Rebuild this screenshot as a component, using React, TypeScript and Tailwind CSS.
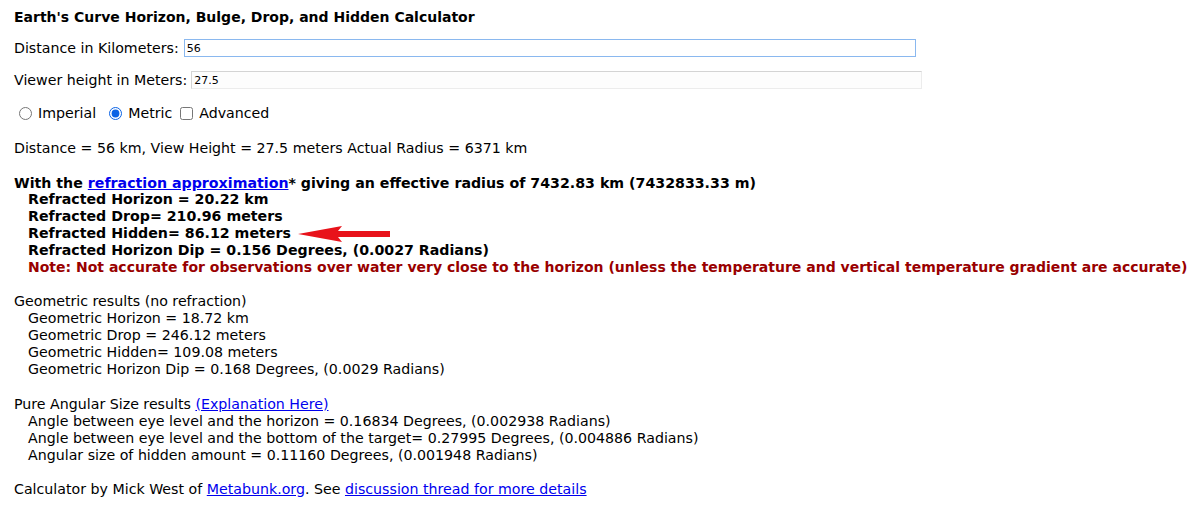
import React from 'react';

const font = { fontFamily: '"DejaVu Sans", Verdana, sans-serif' };

function Arrow() {
  return (
    <svg width="92" height="16" viewBox="0 0 92 16" className="ml-[7px] inline-block align-middle">
      <polygon points="0,8 44,0 40,5 92,5 92,11 40,11 44,16" fill="#e8121a" />
    </svg>
  );
}

export default function App() {
  return (
    <div className="px-[14px] pt-[8px] text-[14.2px] leading-[17px] text-black bg-white" style={font}>
      <h1 className="font-bold text-[14px] leading-[18px]">Earth's Curve Horizon, Bulge, Drop, and Hidden Calculator</h1>

      <div className="mt-[13px] flex items-center">
        <span>Distance in Kilometers:</span>
        <input
          defaultValue="56"
          className="ml-[5px] w-[732px] h-[18px] border border-[#8ab8ef] px-[2px] text-[11px] outline-none"
        />
      </div>

      <div className="mt-[14px] flex items-center">
        <span>Viewer height in Meters:</span>
        <input
          defaultValue="27.5"
          className="ml-[4px] w-[731px] h-[18px] border border-[#d4d4d4] border-b-[#ececec] border-r-[#ececec] bg-[#fdfdfd] px-[2px] text-[11px] outline-none"
        />
      </div>

      <div className="mt-[16px] flex items-center pl-[5px]">
        <input type="radio" name="units" className="w-[13px] h-[13px] m-0 accent-[#0b63e5]" />
        <span className="ml-[6px]">Imperial</span>
        <input type="radio" name="units" defaultChecked className="ml-[13px] w-[13px] h-[13px] m-0 accent-[#0b63e5]" />
        <span className="ml-[6px]">Metric</span>
        <input type="checkbox" className="ml-[8px] w-[13px] h-[13px] m-0" />
        <span className="ml-[6px]">Advanced</span>
      </div>

      <p className="mt-[18px]">Distance = 56 km, View Height = 27.5 meters Actual Radius = 6371 km</p>

      <div className="mt-[18px] font-bold">
        <p className="leading-[16px]">
          With the <a href="#" className="text-[#0000ee] underline">refraction approximation</a>* giving an effective radius of 7432.83 km (7432833.33 m)
        </p>
        <div className="pl-[14px]">
          <p>Refracted Horizon = 20.22 km</p>
          <p>Refracted Drop= 210.96 meters</p>
          <p className="flex items-center">Refracted Hidden= 86.12 meters<Arrow /></p>
          <p>Refracted Horizon Dip = 0.156 Degrees, (0.0027 Radians)</p>
          <p className="text-[#990000] text-[14px] whitespace-nowrap">Note: Not accurate for observations over water very close to the horizon (unless the temperature and vertical temperature gradient are accurate)</p>
        </div>
      </div>

      <div className="mt-[17px]">
        <p>Geometric results (no refraction)</p>
        <div className="pl-[14px]">
          <p>Geometric Horizon = 18.72 km</p>
          <p>Geometric Drop = 246.12 meters</p>
          <p>Geometric Hidden= 109.08 meters</p>
          <p>Geometric Horizon Dip = 0.168 Degrees, (0.0029 Radians)</p>
        </div>
      </div>

      <div className="mt-[18px]">
        <p>
          Pure Angular Size results <a href="#" className="text-[#0000ee] underline">(Explanation Here)</a>
        </p>
        <div className="pl-[14px]">
          <p>Angle between eye level and the horizon = 0.16834 Degrees, (0.002938 Radians)</p>
          <p>Angle between eye level and the bottom of the target= 0.27995 Degrees, (0.004886 Radians)</p>
          <p>Angular size of hidden amount = 0.11160 Degrees, (0.001948 Radians)</p>
        </div>
      </div>

      <p className="mt-[17px]">
        Calculator by Mick West of <a href="#" className="text-[#0000ee] underline">Metabunk.org</a>. See{' '}
        <a href="#" className="text-[#0000ee] underline">discussion thread for more details</a>
      </p>
    </div>
  );
}
